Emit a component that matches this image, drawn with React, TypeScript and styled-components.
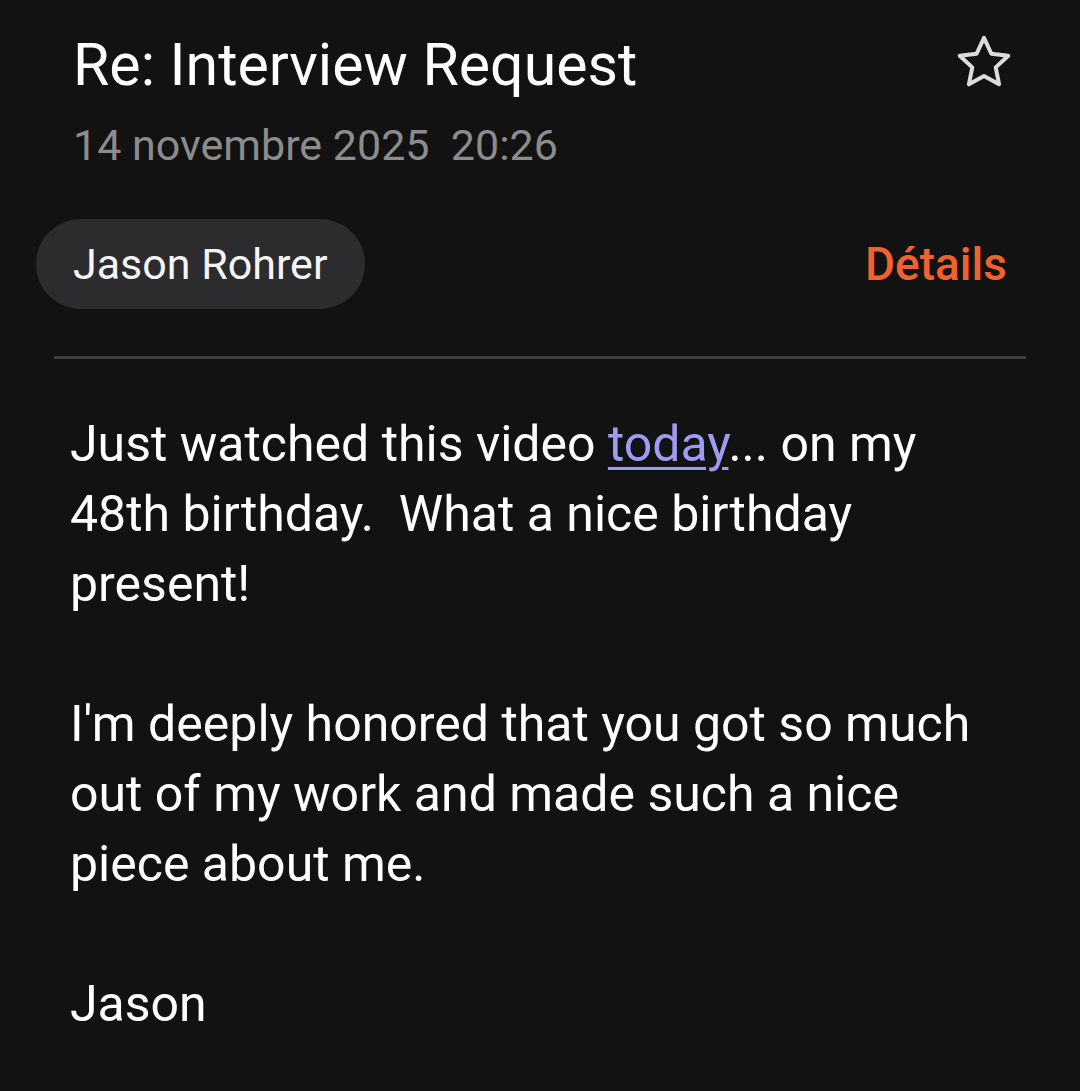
import React from "react";
import styled, { createGlobalStyle } from "styled-components";

const Global = createGlobalStyle`
  html, body { margin: 0; padding: 0; background: #121212; }
  body { font-family: Roboto, "Noto Sans", sans-serif; -webkit-font-smoothing: antialiased; }
`;

const Page = styled.div`
  width: 1080px;
  height: 1091px;
  background: #121212;
  box-sizing: border-box;
  overflow: hidden;
  padding-top: 30px;
`;

const Header = styled.div`
  display: flex;
  justify-content: space-between;
  align-items: flex-start;
  padding: 0 63px 0 73px;
`;

const Title = styled.h1`
  margin: 0;
  font-family: Roboto, sans-serif;
  font-weight: 400;
  font-size: 59px;
  line-height: 70px;
  color: #ffffff;
`;

const StarButton = styled.div`
  width: 66px;
  height: 66px;
  display: flex;
  align-items: center;
  justify-content: center;
`;

const DateLine = styled.div`
  padding-left: 73px;
  margin-top: 19px;
  font-size: 43px;
  line-height: 52px;
  color: #8c8c8c;
  white-space: pre;
`;

const SenderRow = styled.div`
  display: flex;
  justify-content: space-between;
  align-items: center;
  margin-top: 48px;
  padding: 0 73px 0 36px;
`;

const Chip = styled.div`
  height: 90px;
  border-radius: 45px;
  background: #2c2c2e;
  padding: 0 37px;
  display: flex;
  align-items: center;
  font-size: 43px;
  color: #f5f5f5;
`;

const DetailsLink = styled.div`
  font-size: 46px;
  font-weight: 500;
  color: #f0622e;
`;

const Divider = styled.hr`
  margin: 47px 54px 0 54px;
  border: none;
  height: 3px;
  background: #3d3d3d;
`;

const Body = styled.div`
  padding: 50px 70px 0 70px;
  font-size: 50px;
  line-height: 70px;
  color: #ffffff;
`;

const Para = styled.p`
  margin: 0 0 70px 0;
  white-space: pre-wrap;
`;

const Link = styled.a`
  color: #9c9cf2;
  text-decoration: underline;
  text-decoration-thickness: 3px;
  text-underline-offset: 6px;
`;

export default function App() {
  return (
    <>
      <Global />
      <Page>
        <Header>
          <Title>Re: Interview Request</Title>
          <StarButton>
            <svg width="66" height="64" viewBox="0 0 24 24" fill="none" stroke="#dcdcdc" strokeWidth="1.5" strokeLinejoin="round" strokeLinecap="round">
              <path d="M12 2.6l2.75 5.9 6.35.75-4.7 4.4 1.25 6.35L12 16.85 6.35 20l1.25-6.35-4.7-4.4 6.35-.75z" />
            </svg>
          </StarButton>
        </Header>
        <DateLine>14 novembre 2025  20:26</DateLine>
        <SenderRow>
          <Chip>Jason Rohrer</Chip>
          <DetailsLink>Détails</DetailsLink>
        </SenderRow>
        <Divider />
        <Body>
          <Para>
            Just watched this video <Link>today</Link>... on my 48th birthday.  What a nice birthday present!
          </Para>
          <Para>I'm deeply honored that you got so much out of my work and made such a nice piece about me.</Para>
          <Para>Jason</Para>
        </Body>
      </Page>
    </>
  );
}
